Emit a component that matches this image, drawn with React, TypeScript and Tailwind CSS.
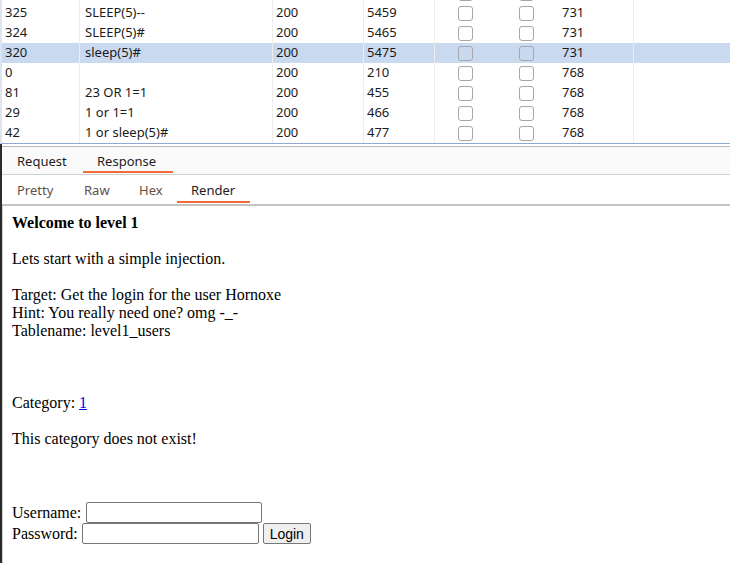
import React from 'react';

type Row = {
  id: string;
  payload: string;
  status: string;
  length: string;
  extra: string;
  selected?: boolean;
};

const rows: Array<Row> = [
  { id: '', payload: '', status: '', length: '', extra: '' },
  { id: '325', payload: 'SLEEP(5)--', status: '200', length: '5459', extra: '731' },
  { id: '324', payload: 'SLEEP(5)#', status: '200', length: '5465', extra: '731' },
  { id: '320', payload: 'sleep(5)#', status: '200', length: '5475', extra: '731', selected: true },
  { id: '0', payload: '', status: '200', length: '210', extra: '768' },
  { id: '81', payload: '23 OR 1=1', status: '200', length: '455', extra: '768' },
  { id: '29', payload: '1 or 1=1', status: '200', length: '466', extra: '768' },
  { id: '42', payload: '1 or sleep(5)#', status: '200', length: '477', extra: '768' },
];

const Checkbox = () => (
  <div className="flex items-center justify-center h-full">
    <div className="w-[15px] h-[15px] border border-[#a6a6a6] rounded-[3px]" />
  </div>
);

const Cell = ({
  children,
  divider = true,
  wide = false,
}: {
  children?: React.ReactNode;
  divider?: boolean;
  wide?: boolean;
}) => (
  <div
    className={`h-full flex items-center whitespace-nowrap overflow-hidden ${wide ? 'pl-[5px]' : 'pl-[3px]'} ${
      divider ? 'border-r border-[#ededed]' : ''
    }`}
  >
    {children}
  </div>
);

const ResultsTable = () => {
  return (
    <div className="h-[144px] overflow-hidden border-l-2 border-[#dde5f0] border-b border-b-[#8eaad2]">
      <div className="-mt-[17px]">
        {rows.map((row, i) => (
          <div
            key={i}
            className={`grid grid-cols-[78px_193px_91px_71px_61px_61px_77px_1fr] h-[20px] text-[13px] text-[#1b1b1b] ${
              row.selected ? 'bg-[#c9daf0]' : 'bg-white'
            }`}
          >
            <Cell>{row.id}</Cell>
            <Cell wide>{row.payload}</Cell>
            <Cell>{row.status}</Cell>
            <Cell>{row.length}</Cell>
            <Checkbox />
            <Checkbox />
            <Cell wide>{row.extra}</Cell>
            <Cell divider={false} />
          </div>
        ))}
      </div>
    </div>
  );
};

const Tab = ({ label, width, active, muted }: { label: string; width: string; active?: boolean; muted?: boolean }) => (
  <div className={`relative h-full flex items-center pl-[14px] pt-[2px] ${width}`}>
    <span className={muted ? 'text-[#5f5048]' : 'text-[#1e1e1e]'}>{label}</span>
    {active && <div className="absolute left-0 right-0 bottom-[1px] h-[2px] bg-[#f26a3a]" />}
  </div>
);

const RenderedPage = () => {
  return (
    <div className="flex-1 border-l border-[#cfcfcf] bg-white pl-[9px] pr-[8px] pt-[8px] font-['Liberation_Serif',serif] text-[16px] leading-[18px] text-black">
      <b>Welcome to level 1</b>
      <br />
      <br />
      Lets start with a simple injection.
      <br />
      <br />
      Target: Get the login for the user Hornoxe
      <br />
      Hint: You really need one? omg -_-
      <br />
      Tablename: level1_users
      <br />
      <br />
      <br />
      <br />
      Category: <span className="underline text-[#0000ee]">1</span>
      <br />
      <br />
      This category does not exist!
      <br />
      <br />
      <br />
      <br />
      <div className="flex items-center h-[21px]">
        <span>Username:</span>
        <div className="ml-[5px] w-[176px] h-[21px] border border-[#767676] rounded-[2px] bg-white" />
      </div>
      <div className="flex items-center h-[21px]">
        <span>Password:</span>
        <div className="ml-[4px] w-[177px] h-[21px] border border-[#767676] rounded-[2px] bg-white" />
        <button className="ml-[4px] w-[48px] h-[21px] border border-[#767676] rounded-[2px] bg-[#efefef] font-['Liberation_Sans',sans-serif] text-[14px] leading-none text-black">
          Login
        </button>
      </div>
    </div>
  );
};

export default function App() {
  return (
    <div className="w-[730px] h-[563px] overflow-hidden bg-white font-['Noto_Sans',sans-serif] flex flex-col">
      <ResultsTable />
      <div className="flex-1 flex border-l-2 border-[#2b2b2b]">
        <div className="flex-1 flex flex-col">
          <div className="h-[2px] bg-white" />
          <div className="h-[29px] bg-[#fafafa] border-t border-[#bdb5b5] border-b border-b-[#c9d1cd] flex text-[13px] pl-[1px]">
            <Tab label="Request" width="w-[80px]" />
            <Tab label="Response" width="w-[90px]" active />
          </div>
          <div className="h-[31px] bg-white border-b-2 border-[#c3c3c3] flex text-[13px] pl-[1px]">
            <Tab label="Pretty" width="w-[67px]" muted />
            <Tab label="Raw" width="w-[55px]" muted />
            <Tab label="Hex" width="w-[52px]" muted />
            <Tab label="Render" width="w-[73px]" active />
          </div>
          <RenderedPage />
        </div>
      </div>
    </div>
  );
}
